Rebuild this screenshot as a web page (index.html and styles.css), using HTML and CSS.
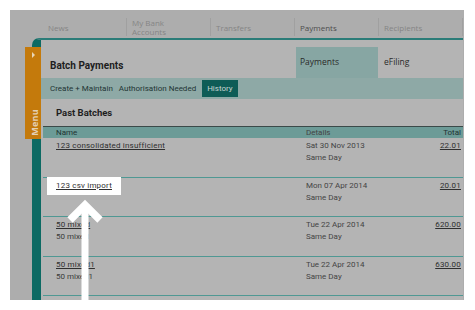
FILE: index.html
```html
<!DOCTYPE html>
<html>
<head>
<meta charset="utf-8">
<link rel="stylesheet" href="styles.css">
</head>
<body>
<div class="frame">
  <nav class="topnav">
    <div class="nav-item">News</div>
    <div class="nav-item">My Bank<br>Accounts</div>
    <div class="nav-item">Transfers</div>
    <div class="nav-item active">Payments</div>
    <div class="nav-item">Recipients</div>
  </nav>
  <div class="main">
    <div class="menu-tab">
      <span class="menu-arrow"></span>
      <span class="menu-label">Menu</span>
    </div>
    <div class="panel">
      <div class="panel-head">
        <h1 class="title">Batch Payments</h1>
        <div class="tabs">
          <div class="tab active">Payments</div>
          <div class="tab">eFiling</div>
        </div>
      </div>
      <div class="subnav">
        <span class="sub-item">Create + Maintain</span>
        <span class="sub-item">Authorisation Needed</span>
        <span class="sub-item current">History</span>
      </div>
      <h2 class="section">Past Batches</h2>
      <div class="table">
        <div class="thead">
          <span class="c-name">Name</span>
          <span class="c-det">Details</span>
          <span class="c-tot">Total</span>
        </div>
        <div class="row">
          <div class="c-name"><a class="link">123 consolidated insufficient</a></div>
          <div class="c-det">Sat 30 Nov 2013<br>Same Day</div>
          <div class="c-tot"><a class="link">22.01</a></div>
        </div>
        <div class="row">
          <div class="c-name"><a class="link spot">123 csv import</a></div>
          <div class="c-det">Mon 07 Apr 2014<br>Same Day</div>
          <div class="c-tot"><a class="link">20.01</a></div>
        </div>
        <div class="row">
          <div class="c-name"><a class="link">50 mixed</a><br>50 mixed</div>
          <div class="c-det">Tue 22 Apr 2014<br>Same Day</div>
          <div class="c-tot"><a class="link">620.00</a></div>
        </div>
        <div class="row">
          <div class="c-name"><a class="link">50 mixed1</a><br>50 mixed1</div>
          <div class="c-det">Tue 22 Apr 2014<br>Same Day</div>
          <div class="c-tot"><a class="link">630.00</a></div>
        </div>
        <div class="row">
          <div class="c-name"><a class="link">50 mixed2</a></div>
          <div class="c-det">Thu 01 May 2014</div>
          <div class="c-tot"><a class="link">1,480.00</a></div>
        </div>
      </div>
    </div>
  </div>
  <svg class="arrow" width="40" height="110" viewBox="0 0 40 110">
    <rect x="16.5" y="6" width="7" height="104" fill="#fff"/>
    <polyline points="5,21 20,6 35,21" fill="none" stroke="#fff" stroke-width="7.5" stroke-linejoin="miter" stroke-miterlimit="10"/>
  </svg>
</div>
</body>
</html>
```

FILE: styles.css
```css
html, body {
  margin: 0;
  padding: 0;
  background: #ffffff;
}

body {
  font-family: Roboto, "Liberation Sans", Arial, sans-serif;
  font-size: 8px;
  color: #363636;
}

.frame {
  position: relative;
  margin: 10px 0 0 10px;
  width: 454px;
  height: 290px;
  overflow: hidden;
  background: #adadad;
}

/* top navigation */
.topnav {
  display: flex;
  height: 28px;
  padding-left: 33px;
}

.nav-item {
  box-sizing: border-box;
  width: 84px;
  height: 18px;
  margin-top: 8px;
  padding-left: 5px;
  border-right: 1px solid #a0a0a0;
  display: flex;
  align-items: center;
  font-family: "Open Sans", sans-serif;
  font-size: 8px;
  line-height: 9px;
  color: #858585;
}

.nav-item.active {
  color: #4e4e4e;
}

/* main area */
.main {
  position: relative;
  display: flex;
  padding-left: 22px;
  height: 262px;
}

.menu-tab {
  position: absolute;
  left: 15px;
  top: 9px;
  width: 16px;
  height: 92px;
  background: #c47a0c;
  z-index: 2;
}

.menu-arrow {
  position: absolute;
  left: 7px;
  top: 5px;
  width: 0;
  height: 0;
  border-top: 3px solid transparent;
  border-bottom: 3px solid transparent;
  border-left: 3px solid #e8d6b8;
}

.menu-label {
  position: absolute;
  left: 3px;
  bottom: 3px;
  writing-mode: vertical-rl;
  transform: rotate(180deg);
  font-family: "Open Sans", sans-serif;
  font-weight: 700;
  font-size: 9px;
  letter-spacing: 0.3px;
  color: #e3d0b4;
}

.panel {
  flex: 1;
  min-width: 0;
  margin-right: 1px;
  border-left: 9px solid #0c6a63;
  border-top: 2px solid #2b7c78;
  border-top-left-radius: 7px;
  background: #b4b4b4;
}

.panel-head {
  display: flex;
  height: 38px;
}

.title {
  margin: 20px 0 0 9px;
  font-size: 10px;
  line-height: 12px;
  font-weight: 700;
  color: #1e1e1e;
}

.tabs {
  margin-left: auto;
  display: flex;
  align-self: flex-end;
}

.tab {
  box-sizing: border-box;
  height: 31px;
  padding: 9px 0 0 6px;
  width: 85px;
  font-family: "Open Sans", sans-serif;
  font-size: 8.5px;
  line-height: 12px;
  color: #2a2a2a;
}

.tab.active {
  width: 82px;
  padding-left: 4px;
  background: #87a6a3;
}

.subnav {
  display: flex;
  align-items: center;
  height: 21px;
  padding-left: 9px;
  background: #8ea9a6;
}

.sub-item {
  margin-right: 6px;
  font-size: 8px;
  line-height: 12px;
  color: #1f3534;
}

.sub-item.current {
  padding: 3px 5px 2px;
  background: #0e5c56;
  color: #c7d4d2;
}

.section {
  margin: 0;
  padding-left: 15px;
  height: 27px;
  display: flex;
  align-items: center;
  font-size: 9.5px;
  font-weight: 700;
  color: #1e1e1e;
}

/* table */
.table {
  margin-left: 2px;
}

.thead {
  display: flex;
  height: 11px;
  border-top: 1px solid #3b4a49;
  background: #6c9b97;
  color: #1f3332;
  line-height: 11px;
}

.row {
  display: flex;
  box-sizing: border-box;
  height: 39.5px;
  padding-top: 2px;
  border-bottom: 1px solid #4f9893;
  line-height: 12px;
}

.c-name {
  flex: none;
  box-sizing: border-box;
  width: 263px;
  padding-left: 13px;
}

.c-det {
  flex: 1;
  min-width: 0;
  color: #444444;
}

.c-tot {
  flex: none;
  text-align: right;
  padding-right: 2px;
}

.link {
  color: #2f2f2f;
  text-decoration: underline;
  text-underline-offset: 1px;
  letter-spacing: 0.2px;
}

.row .c-name {
  color: #3a3a3a;
}

.spot {
  position: relative;
  display: inline-block;
  margin: -3px 0 0 -9px;
  padding: 3px 9px;
  background: #ffffff;
  z-index: 1;
}

.arrow {
  position: absolute;
  left: 55px;
  top: 189px;
  z-index: 3;
}
```
